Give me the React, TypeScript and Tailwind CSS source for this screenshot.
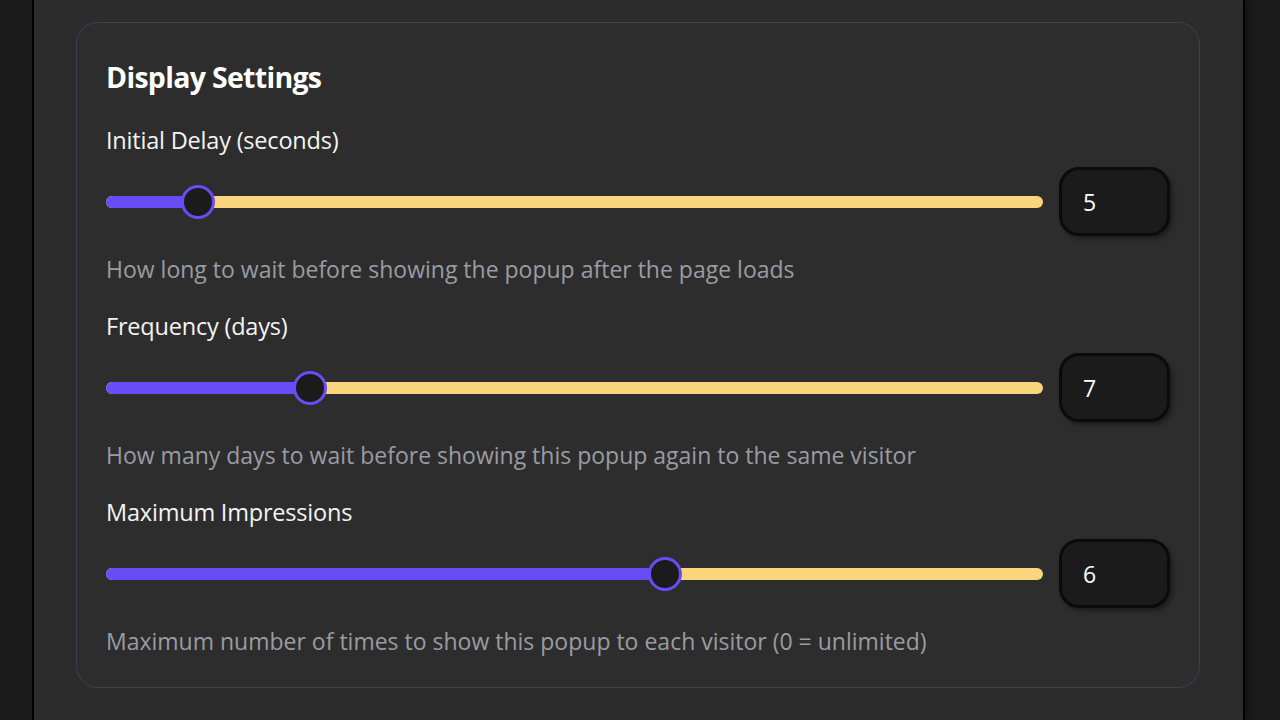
import { useState } from 'react';

type Setting = {
  label: string;
  value: number;
  pct: number;
  hint: string;
};

const settings: Setting[] = [
  { label: 'Initial Delay (seconds)', value: 5, pct: 8.3, hint: 'How long to wait before showing the popup after the page loads' },
  { label: 'Frequency (days)', value: 7, pct: 20.7, hint: 'How many days to wait before showing this popup again to the same visitor' },
  { label: 'Maximum Impressions', value: 6, pct: 60, hint: 'Maximum number of times to show this popup to each visitor (0 = unlimited)' },
];

function Slider({ pct }: { pct: number }) {
  // thumb travels within the track minus its own width, like a native range input
  const left = `calc(${pct / 100} * (100% - 34px))`;
  return (
    <div className="relative flex-1 h-[34px] flex items-center">
      <div className="w-full h-[12px] rounded-full bg-[#f9d57b]" />
      <div
        className="absolute left-0 h-[12px] rounded-l-full bg-[#6a4cf6]"
        style={{ width: `calc(${left} + 17px)` }}
      />
      <div
        className="absolute top-0 w-[34px] h-[34px] rounded-full border-[3px] border-[#6a4cf6] bg-[#1b1b1b]"
        style={{ left }}
      />
    </div>
  );
}

function SettingRow({ s }: { s: Setting }) {
  const [val, setVal] = useState(String(s.value));
  return (
    <div className="flex flex-col">
      <div className="text-[23.5px] leading-[28px] text-[#f4f4f5] font-medium tracking-[-0.2px]">{s.label}</div>
      <div className="mt-[13px] flex items-center gap-[16px]">
        <Slider pct={s.pct} />
        <input
          value={val}
          onChange={(e) => setVal(e.target.value)}
          className="w-[111px] h-[69px] rounded-[20px] border-[3px] border-[#0b0b0b] bg-[#1b1b1b] pl-[21px] text-[23px] text-white outline-none shadow-[3px_3px_4px_rgba(0,0,0,0.35)]"
        />
      </div>
      <div className="mt-[19px] text-[23px] leading-[28px] text-[#9a9ca3]">{s.hint}</div>
    </div>
  );
}

export default function App() {
  return (
    <div className="min-h-[720px] bg-[#1b1b1b] flex" style={{ fontFamily: '"Open Sans", "Noto Sans", sans-serif' }}>
      <div className="ml-[32px] w-[1213px] min-h-[720px] bg-[#2c2c2c] border-x-2 border-black shadow-[4px_0_8px_rgba(0,0,0,0.35)] pl-[42px] pr-[43px] pt-[22px]">
        <div className="rounded-[22px] border border-[#3b4056] bg-[#2d2d2d] px-[29px] pt-[36px] pb-[32px]">
          <h2 className="text-[28.5px] leading-[36px] font-bold text-white tracking-[-0.7px]">Display Settings</h2>
          <div className="mt-[31px] flex flex-col gap-[29px]">
            {settings.map((s) => (
              <SettingRow key={s.label} s={s} />
            ))}
          </div>
        </div>
      </div>
    </div>
  );
}
